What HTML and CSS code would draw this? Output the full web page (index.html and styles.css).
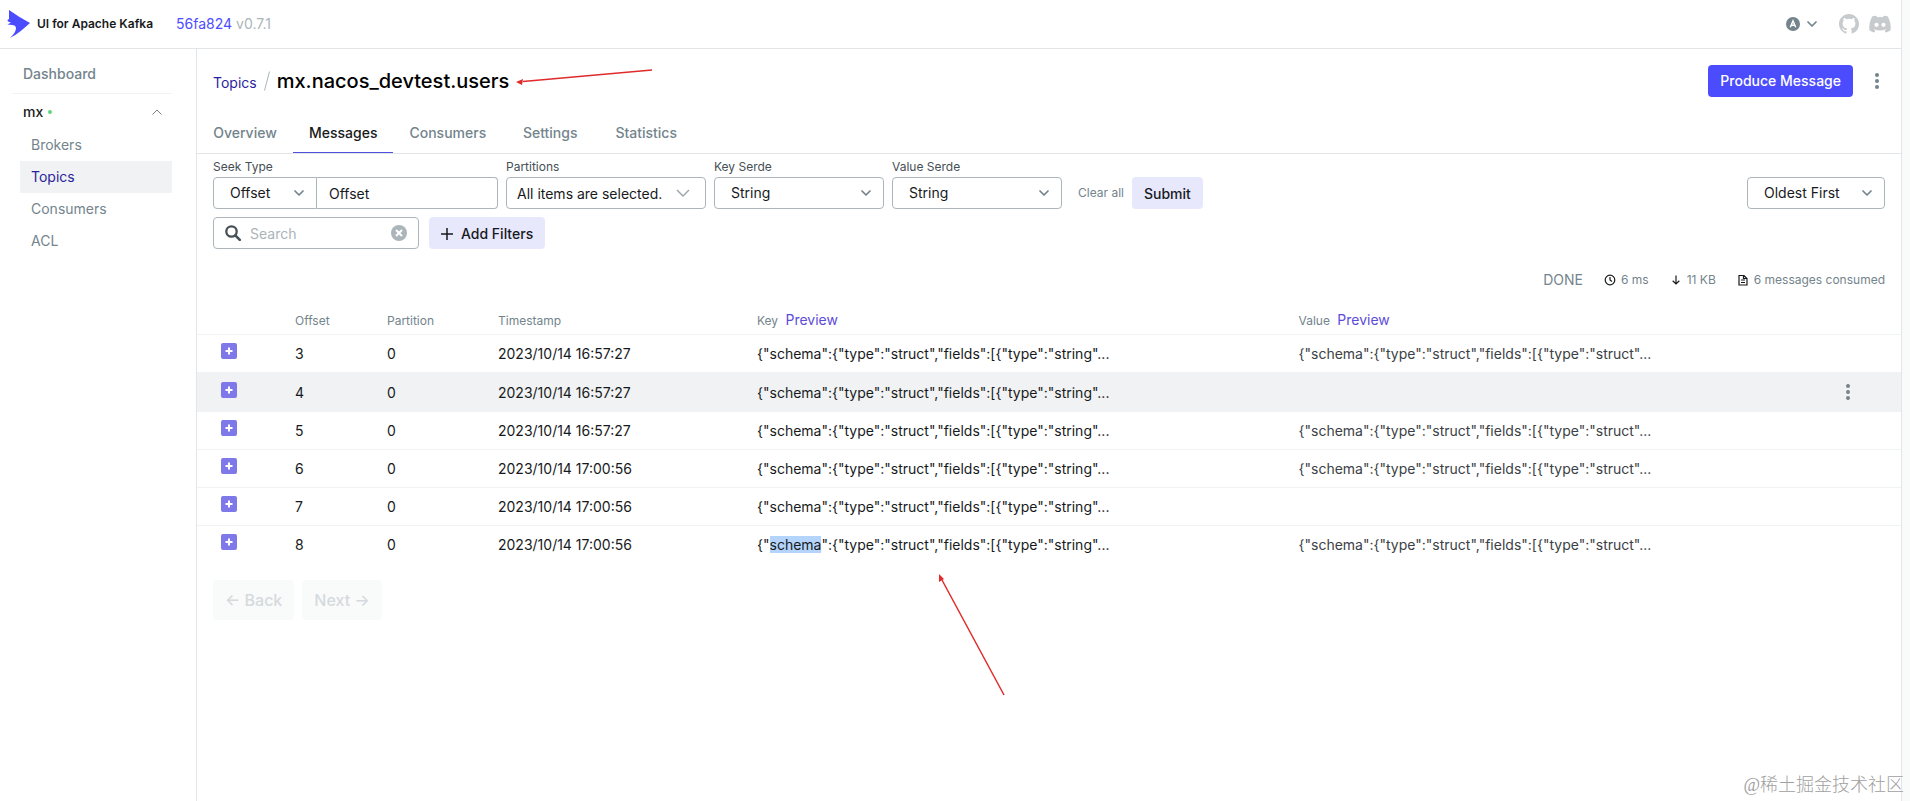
FILE: index.html
```html
<!DOCTYPE html>
<html lang="en">
<head>
    <meta charset="UTF-8">
    <meta name="viewport" content="width=device-width, initial-scale=1.0">
    <title>UI for Apache Kafka</title>
    <link rel="stylesheet" href="styles.css">
</head>
<body>
    <svg class="symbols" aria-hidden="true">
        <symbol id="chevron" viewBox="0 0 10 6"><path d="M1 1l4 4 4-4" fill="none" stroke="currentColor" stroke-width="1.7" stroke-linecap="round" stroke-linejoin="round"/></symbol>
        <symbol id="dots" viewBox="0 0 4 16"><circle cx="2" cy="2" r="2"/><circle cx="2" cy="8" r="2"/><circle cx="2" cy="14" r="2"/></symbol>
        <symbol id="expand" viewBox="0 0 16 16"><rect width="16" height="16" rx="2" fill="#7e78e8"/><path d="M8 4.500v7M4.500 8h7" stroke="#fff" stroke-width="2"/></symbol>
    </svg>
    <div class="app">
        <header class="navbar">
            <a class="brand" href="#">
                <svg class="logo" viewBox="0 0 24 30"><path d="M2 1C9 6 16 10 23 14 17 19 11 25 3 29c4-4 6-7 6-10 0-2-2-3-4-3L.5 15.500 4 13.500C1 13 .5 12 .5 11L2 10z" fill="#4c4cff"/></svg>
                <span>UI for Apache Kafka</span>
            </a>
            <div class="version"><a href="#">56fa824</a> v0.7.1</div>
            <div class="navbar-right">
                <button class="theme-button" aria-label="Theme">
                    <svg width="14" height="14" viewBox="0 0 14 14"><circle cx="7" cy="7" r="7" fill="#73848c"/><path d="M4.300 10.200L7 4l2.700 6.200M5.300 8.300h3.400" fill="none" stroke="#fff" stroke-width="1.500"/></svg>
                    <svg class="chevron" aria-hidden="true"><use href="#chevron"/></svg>
                </button>
                <a class="social" href="#" aria-label="GitHub">
                    <svg width="20" height="20" viewBox="0 0 16 16"><path d="M8 0C3.580 0 0 3.580 0 8c0 3.540 2.290 6.530 5.470 7.590.4.070.55-.17.55-.38 0-.19-.01-.82-.01-1.490-2.010.37-2.530-.49-2.690-.94-.09-.23-.48-.94-.82-1.130-.28-.15-.68-.52-.01-.53.63-.01 1.080.58 1.230.82.72 1.210 1.870.87 2.330.66.07-.52.28-.87.51-1.070-1.780-.2-3.640-.89-3.640-3.950 0-.87.31-1.590.82-2.150-.08-.2-.36-1.020.08-2.120 0 0 .67-.21 2.200.82a7.600 7.600 0 0 1 4 0c1.530-1.040 2.200-.82 2.200-.82.44 1.100.16 1.920.08 2.120.51.56.82 1.270.82 2.150 0 3.070-1.870 3.750-3.650 3.950.29.25.54.73.54 1.480 0 1.070-.01 1.930-.01 2.200 0 .21.15.46.55.38A8 8 0 0 0 16 8c0-4.420-3.580-8-8-8z" fill="#c7cbcd"/></svg>
                </a>
                <a class="social" href="#" aria-label="Discord">
                    <svg width="22" height="18" viewBox="0 0 22 18"><path d="M7.500 1L5.500.8C4 1 3.300 1.600 2.700 2.500 1 5.500 0 10 .3 15c1.700 1.500 3.400 2.200 5 2.500l1.200-1.900-1.800-.9.500-.5c3.600 1.700 8 1.700 11.600 0l.5.500-1.800.9 1.200 1.900c1.600-.3 3.300-1 5-2.500.3-5-.7-9.500-2.400-12.500-.6-.9-1.300-1.500-2.800-1.700l-2 .2-.6 1.200a16 16 0 0 0-5.800 0z" fill="#c7cbcd"/><circle cx="7.500" cy="9.800" r="2.100" fill="#fff"/><circle cx="14.500" cy="9.800" r="2.100" fill="#fff"/></svg>
                </a>
            </div>
        </header>

        <div class="body">
            <nav class="sidebar">
                <a class="dashboard" href="#">Dashboard</a>
                <button class="cluster">
                    mx <span class="status-dot"></span>
                    <svg viewBox="0 0 10 6" aria-hidden="true"><path d="M.5 5.500L5 1l4.500 4.500" fill="none" stroke="#73848c"/></svg>
                </button>
                <ul class="menu">
                    <li><a href="#">Brokers</a></li>
                    <li><a class="active" href="#">Topics</a></li>
                    <li><a href="#">Consumers</a></li>
                    <li><a href="#">ACL</a></li>
                </ul>
            </nav>

            <main class="content">
                <div class="page-heading">
                    <a href="#">Topics</a>
                    <svg class="slash" viewBox="0 0 6 20" aria-hidden="true"><path d="M5.500.5l-5 19" stroke="#abb5ba"/></svg>
                    <h1>mx.nacos_devtest.users</h1>
                    <button class="produce-button">Produce Message</button>
                    <button class="dots-button" aria-label="Topic menu"><svg><use href="#dots"/></svg></button>
                </div>

                <nav class="tabs">
                    <a href="#">Overview</a>
                    <a class="active" href="#">Messages</a>
                    <a href="#">Consumers</a>
                    <a href="#">Settings</a>
                    <a href="#">Statistics</a>
                </nav>

                <div class="filters">
                    <div class="field">
                        <label for="seekType">Seek Type</label>
                        <div class="seek">
                            <div class="select seek-select">
                                <select id="seekType"><option>Offset</option></select>
                                <svg class="chevron"><use href="#chevron"/></svg>
                            </div>
                            <input class="seek-input" type="text" aria-label="Offset" value="Offset">
                        </div>
                    </div>
                    <div class="field">
                        <label for="partitions">Partitions</label>
                        <div class="select partitions">
                            <select id="partitions"><option>All items are selected.</option></select>
                            <svg class="chevron" viewBox="0 0 14 8"><path d="M1 1l6 6 6-6" fill="none" stroke="#9aa3a7" stroke-width="1.400"/></svg>
                        </div>
                    </div>
                    <div class="field">
                        <label for="keySerde">Key Serde</label>
                        <div class="select serde">
                            <select id="keySerde"><option>String</option></select>
                            <svg class="chevron"><use href="#chevron"/></svg>
                        </div>
                    </div>
                    <div class="field">
                        <label for="valueSerde">Value Serde</label>
                        <div class="select serde">
                            <select id="valueSerde"><option>String</option></select>
                            <svg class="chevron"><use href="#chevron"/></svg>
                        </div>
                    </div>
                    <button class="clear-button">Clear all</button>
                    <button class="secondary-button">Submit</button>
                    <div class="select order">
                        <select aria-label="Order"><option>Oldest First</option></select>
                        <svg class="chevron"><use href="#chevron"/></svg>
                    </div>
                </div>

                <div class="search-row">
                    <div class="search">
                        <svg width="16" height="16" viewBox="0 0 16 16"><circle cx="6.500" cy="6.500" r="5.200" fill="none" stroke="#454f54" stroke-width="2.300"/><path d="M10.300 10.300l4.500 4.500" stroke="#454f54" stroke-width="2.600" stroke-linecap="round"/></svg>
                        <input type="text" aria-label="Search" placeholder="Search">
                        <button aria-label="Clear search">
                            <svg width="16" height="16" viewBox="0 0 16 16"><circle cx="8" cy="8" r="8" fill="#abb5ba"/><path d="M5 5l6 6M11 5l-6 6" stroke="#fff" stroke-width="2"/></svg>
                        </button>
                    </div>
                    <button class="secondary-button">
                        <svg width="12" height="12" viewBox="0 0 12 12"><path d="M6 0v12M0 6h12" stroke="#171a1c" stroke-width="1.500"/></svg>
                        Add Filters
                    </button>
                </div>

                <div class="metrics">
                    <span class="done">DONE</span>
                    <span class="metric">
                        <svg width="12" height="12" viewBox="0 0 12 12"><circle cx="6" cy="6" r="4.800"/><path d="M6 3v3l2 1.500"/></svg>
                        6 ms
                    </span>
                    <span class="metric">
                        <svg width="12" height="12" viewBox="0 0 12 12"><path d="M6 1.500v8.500M2.700 6.800L6 10l3.300-3.200"/></svg>
                        11 KB
                    </span>
                    <span class="metric">
                        <svg width="12" height="12" viewBox="0 0 12 12"><path d="M2 1.500h5l3 3v6.500H2zM4 6h4M4 8.500h4M6.500 1.500v3H10"/></svg>
                        6 messages consumed
                    </span>
                </div>

                <table class="messages">
                    <colgroup>
                        <col class="col-expand"><col class="col-offset"><col class="col-partition"><col class="col-time"><col class="col-key"><col class="col-value"><col class="col-menu">
                    </colgroup>
                    <thead>
                        <tr>
                            <th></th>
                            <th>Offset</th>
                            <th>Partition</th>
                            <th>Timestamp</th>
                            <th>Key <a href="#">Preview</a></th>
                            <th>Value <a href="#">Preview</a></th>
                            <th></th>
                        </tr>
                    </thead>
                    <tbody>
                        <tr>
                            <td class="expand"><button aria-label="Expand"><svg><use href="#expand"/></svg></button></td>
                            <td>3</td>
                            <td>0</td>
                            <td>2023/10/14 16:57:27</td>
                            <td>{"schema":{"type":"struct","fields":[{"type":"string"...</td>
                            <td class="value">{"schema":{"type":"struct","fields":[{"type":"struct"...</td>
                            <td></td>
                        </tr>
                        <tr class="hovered">
                            <td class="expand"><button aria-label="Expand"><svg><use href="#expand"/></svg></button></td>
                            <td>4</td>
                            <td>0</td>
                            <td>2023/10/14 16:57:27</td>
                            <td>{"schema":{"type":"struct","fields":[{"type":"string"...</td>
                            <td class="value"></td>
                            <td class="row-menu"><button class="dots-button" aria-label="Message menu"><svg><use href="#dots"/></svg></button></td>
                        </tr>
                        <tr>
                            <td class="expand"><button aria-label="Expand"><svg><use href="#expand"/></svg></button></td>
                            <td>5</td>
                            <td>0</td>
                            <td>2023/10/14 16:57:27</td>
                            <td>{"schema":{"type":"struct","fields":[{"type":"string"...</td>
                            <td class="value">{"schema":{"type":"struct","fields":[{"type":"struct"...</td>
                            <td></td>
                        </tr>
                        <tr>
                            <td class="expand"><button aria-label="Expand"><svg><use href="#expand"/></svg></button></td>
                            <td>6</td>
                            <td>0</td>
                            <td>2023/10/14 17:00:56</td>
                            <td>{"schema":{"type":"struct","fields":[{"type":"string"...</td>
                            <td class="value">{"schema":{"type":"struct","fields":[{"type":"struct"...</td>
                            <td></td>
                        </tr>
                        <tr>
                            <td class="expand"><button aria-label="Expand"><svg><use href="#expand"/></svg></button></td>
                            <td>7</td>
                            <td>0</td>
                            <td>2023/10/14 17:00:56</td>
                            <td>{"schema":{"type":"struct","fields":[{"type":"string"...</td>
                            <td class="value"></td>
                            <td></td>
                        </tr>
                        <tr>
                            <td class="expand"><button aria-label="Expand"><svg><use href="#expand"/></svg></button></td>
                            <td>8</td>
                            <td>0</td>
                            <td>2023/10/14 17:00:56</td>
                            <td>{"<mark>schema</mark>":{"type":"struct","fields":[{"type":"string"...</td>
                            <td class="value">{"schema":{"type":"struct","fields":[{"type":"struct"...</td>
                            <td></td>
                        </tr>
                    </tbody>
                </table>

                <div class="pagination">
                    <button disabled>← Back</button>
                    <button disabled>Next →</button>
                </div>
            </main>
        </div>
    </div>

    <!-- red pointers drawn over the page -->
    <svg class="arrows" width="1100" height="720" aria-hidden="true">
        <path d="M652 70L523 81.500M1004 695L942 580" stroke="#e02b2b" stroke-width="1.500"/>
        <path d="M516 82l7-3-1 6zM939 574l5 5-5 3z" fill="#e02b2b"/>
    </svg>
    <div class="watermark">@稀土掘金技术社区</div>
</body>
</html>
```
FILE: styles.css
```css
* {
    box-sizing: border-box;
}
body {
    margin: 0;
    background-color: #f9fafa;
    color: #171a1c;
    font-family: Inter, sans-serif;
    font-size: 14px;
    line-height: 20px;
    position: relative;
}
a {
    color: #4c4cff;
    text-decoration: none;
}
button, input, select {
    font: inherit;
    color: inherit;
}
button {
    border: none;
    background: none;
    padding: 0;
    cursor: pointer;
}
.symbols {
    display: none;
}
.app {
    min-height: 100vh;
    margin-right: 8px;
    background-color: #fff;
    border-right: 1px solid #e3e6e8;
    display: flex;
    flex-direction: column;
}

/* top bar */
.navbar {
    display: flex;
    align-items: center;
    height: 49px;
    padding: 0 10px 0 7px;
    border-bottom: 1px solid #e3e6e8;
}
.brand {
    display: flex;
    align-items: center;
    gap: 6px;
    color: #171a1c;
    font-size: 12px;
    font-weight: 600;
}
.logo {
    width: 24px;
    height: 30px;
}
.version {
    margin-left: 23px;
    color: #abb5ba;
}
.navbar-right {
    margin-left: auto;
    display: flex;
    align-items: center;
    gap: 10px;
}
.theme-button {
    display: flex;
    align-items: center;
    gap: 7px;
    margin-right: 12px;
}
.social {
    display: flex;
}
.chevron {
    width: 10px;
    height: 6px;
    color: #73848c;
}

/* left menu */
.body {
    flex: 1;
    display: flex;
}
.sidebar {
    width: 197px;
    flex-shrink: 0;
    padding: 9px 24px 0 12px;
    border-right: 1px solid #e3e6e8;
}
.sidebar a {
    display: block;
    padding: 6px 11px;
    color: #73848c;
}
.sidebar .dashboard {
    padding-bottom: 9px;
    border-bottom: 1px solid #f1f2f3;
    font-weight: 500;
}
.cluster {
    display: flex;
    align-items: center;
    gap: 5px;
    width: 100%;
    height: 35px;
    padding: 0 10px 0 11px;
    font-weight: 500;
}
.cluster svg {
    width: 10px;
    height: 6px;
    margin-left: auto;
}
.status-dot {
    width: 4px;
    height: 4px;
    border-radius: 50%;
    background-color: #5cd685;
}
.menu {
    list-style: none;
    margin: 0;
    padding: 0 0 0 8px;
}
.sidebar .active {
    background-color: #f1f2f3;
    color: #2b1f9e;
}

/* page heading and tabs */
.content {
    flex: 1;
    min-width: 0;
}
.page-heading {
    display: flex;
    align-items: center;
    padding: 16px;
}
.page-heading a {
    padding-top: 3px;
    color: #2b1f9e;
}
.slash {
    width: 6px;
    height: 20px;
    margin: 0 7px;
}
.page-heading h1 {
    margin: 0;
    font-size: 20px;
    line-height: 32px;
    font-weight: 500;
    color: #000;
}
.produce-button {
    margin-left: auto;
    height: 32px;
    padding: 0 12px;
    border-radius: 4px;
    background-color: #4c4cff;
    color: #fff;
    font-weight: 500;
}
.dots-button {
    display: flex;
    align-items: center;
    justify-content: center;
    width: 16px;
    height: 24px;
}
.dots-button svg {
    width: 4px;
    height: 16px;
    fill: #73848c;
}
.page-heading .dots-button {
    margin-left: 16px;
}
.tabs {
    display: flex;
    border-bottom: 1px solid #e3e6e8;
}
.tabs a {
    min-width: 96px;
    height: 40px;
    padding: 10px 16px 0;
    border-bottom: 1px solid transparent;
    text-align: center;
    font-weight: 500;
    color: #73848c;
}
.tabs .active {
    border-bottom-color: #4f4fdb;
    color: #171a1c;
}

/* filters */
.filters {
    display: flex;
    align-items: flex-end;
    gap: 8px;
    padding: 4px 16px 0;
}
.field label {
    display: block;
    margin-bottom: 2px;
    font-size: 12px;
    line-height: 17px;
    color: #454f54;
}
.seek {
    display: flex;
}
.select {
    display: grid;
    align-items: center;
}
.select select,
.select .chevron {
    grid-area: 1 / 1;
}
.select select {
    appearance: none;
    width: 100%;
    height: 32px;
    padding: 0 16px;
    border: 1px solid #abb5ba;
    border-radius: 4px;
    background-color: #fff;
}
.select .chevron {
    justify-self: end;
    margin-right: 13px;
    pointer-events: none;
}
.seek-select {
    width: 104px;
}
.seek-select select {
    border-radius: 4px 0 0 4px;
}
.seek-input {
    width: 181px;
    height: 32px;
    padding: 1px 12px 0;
    border: 1px solid #abb5ba;
    border-left: none;
    border-radius: 0 4px 4px 0;
}
.partitions {
    width: 200px;
}
.partitions select {
    padding: 1px 10px 0;
}
.partitions .chevron {
    width: 14px;
    height: 8px;
    margin-right: 16px;
}
.serde {
    width: 170px;
}
.clear-button {
    height: 32px;
    margin-left: 8px;
    font-size: 12px;
    color: #73848c;
}
.secondary-button {
    display: flex;
    align-items: center;
    gap: 8px;
    height: 32px;
    padding: 2px 12px 0;
    border-radius: 4px;
    background-color: #e8e8fc;
    font-weight: 500;
}
.order {
    width: 138px;
    margin-left: auto;
}
.search-row {
    display: flex;
    gap: 10px;
    padding: 8px 16px 0;
}
.search {
    display: flex;
    align-items: center;
    gap: 9px;
    width: 206px;
    height: 32px;
    padding: 0 11px;
    border: 1px solid #abb5ba;
    border-radius: 4px;
}
.search input {
    flex: 1;
    min-width: 0;
    border: none;
    outline: none;
    background: none;
    padding: 2px 0 0;
}
.search input::placeholder {
    color: #abb5ba;
}
.search svg {
    display: block;
}
.metrics {
    display: flex;
    justify-content: flex-end;
    align-items: center;
    gap: 21px;
    padding: 21px 16px 16px;
    color: #73848c;
}
.metric {
    display: flex;
    align-items: center;
    gap: 5px;
    font-size: 12px;
}
.metric svg {
    fill: none;
    stroke: #171a1c;
    stroke-width: 1.2;
}

/* messages table */
.messages {
    width: 100%;
    table-layout: fixed;
    border-collapse: separate;
    border-spacing: 0;
}
.col-expand {
    width: 74px;
}
.col-offset {
    width: 92px;
}
.col-partition {
    width: 111px;
}
.col-time {
    width: 259px;
}
.col-menu {
    width: 85px;
}
.messages th {
    padding: 4px 0 3px 24px;
    border-bottom: 1px solid #f1f2f3;
    text-align: left;
    font-size: 12px;
    font-weight: 400;
    color: #73848c;
}
.messages th a {
    margin-left: 4px;
    font-size: 14px;
    color: #5c4cdb;
}
.messages td {
    padding: 9px 0 8px 24px;
    border-bottom: 1px solid #f1f2f3;
    white-space: nowrap;
}
.messages tbody tr:last-child td {
    border-bottom-color: transparent;
}
.messages .expand {
    padding: 8px 0 13px 24px;
}
.messages .row-menu {
    padding: 7px 0 7px 24px;
}
.expand button,
.expand svg {
    display: block;
    width: 16px;
    height: 16px;
}
.messages .value {
    color: #3b4145;
}
.hovered {
    background-color: #f1f2f3;
}
mark {
    background-color: #b4d4fb;
    color: inherit;
}
.pagination {
    display: flex;
    gap: 8px;
    padding: 16px;
}
.pagination button {
    height: 40px;
    padding: 0 12px;
    border-radius: 4px;
    background-color: #f9fafa;
    color: #d5dadd;
    font-size: 16px;
    font-weight: 500;
}

.arrows {
    position: absolute;
    top: 0;
    left: 0;
    pointer-events: none;
}
.watermark {
    position: absolute;
    right: 6px;
    bottom: 4px;
    font-family: "Liberation Serif", "Noto Sans CJK SC", serif;
    font-size: 18px;
    line-height: 24px;
    font-weight: 300;
    color: #a0a0a0;
}
```
